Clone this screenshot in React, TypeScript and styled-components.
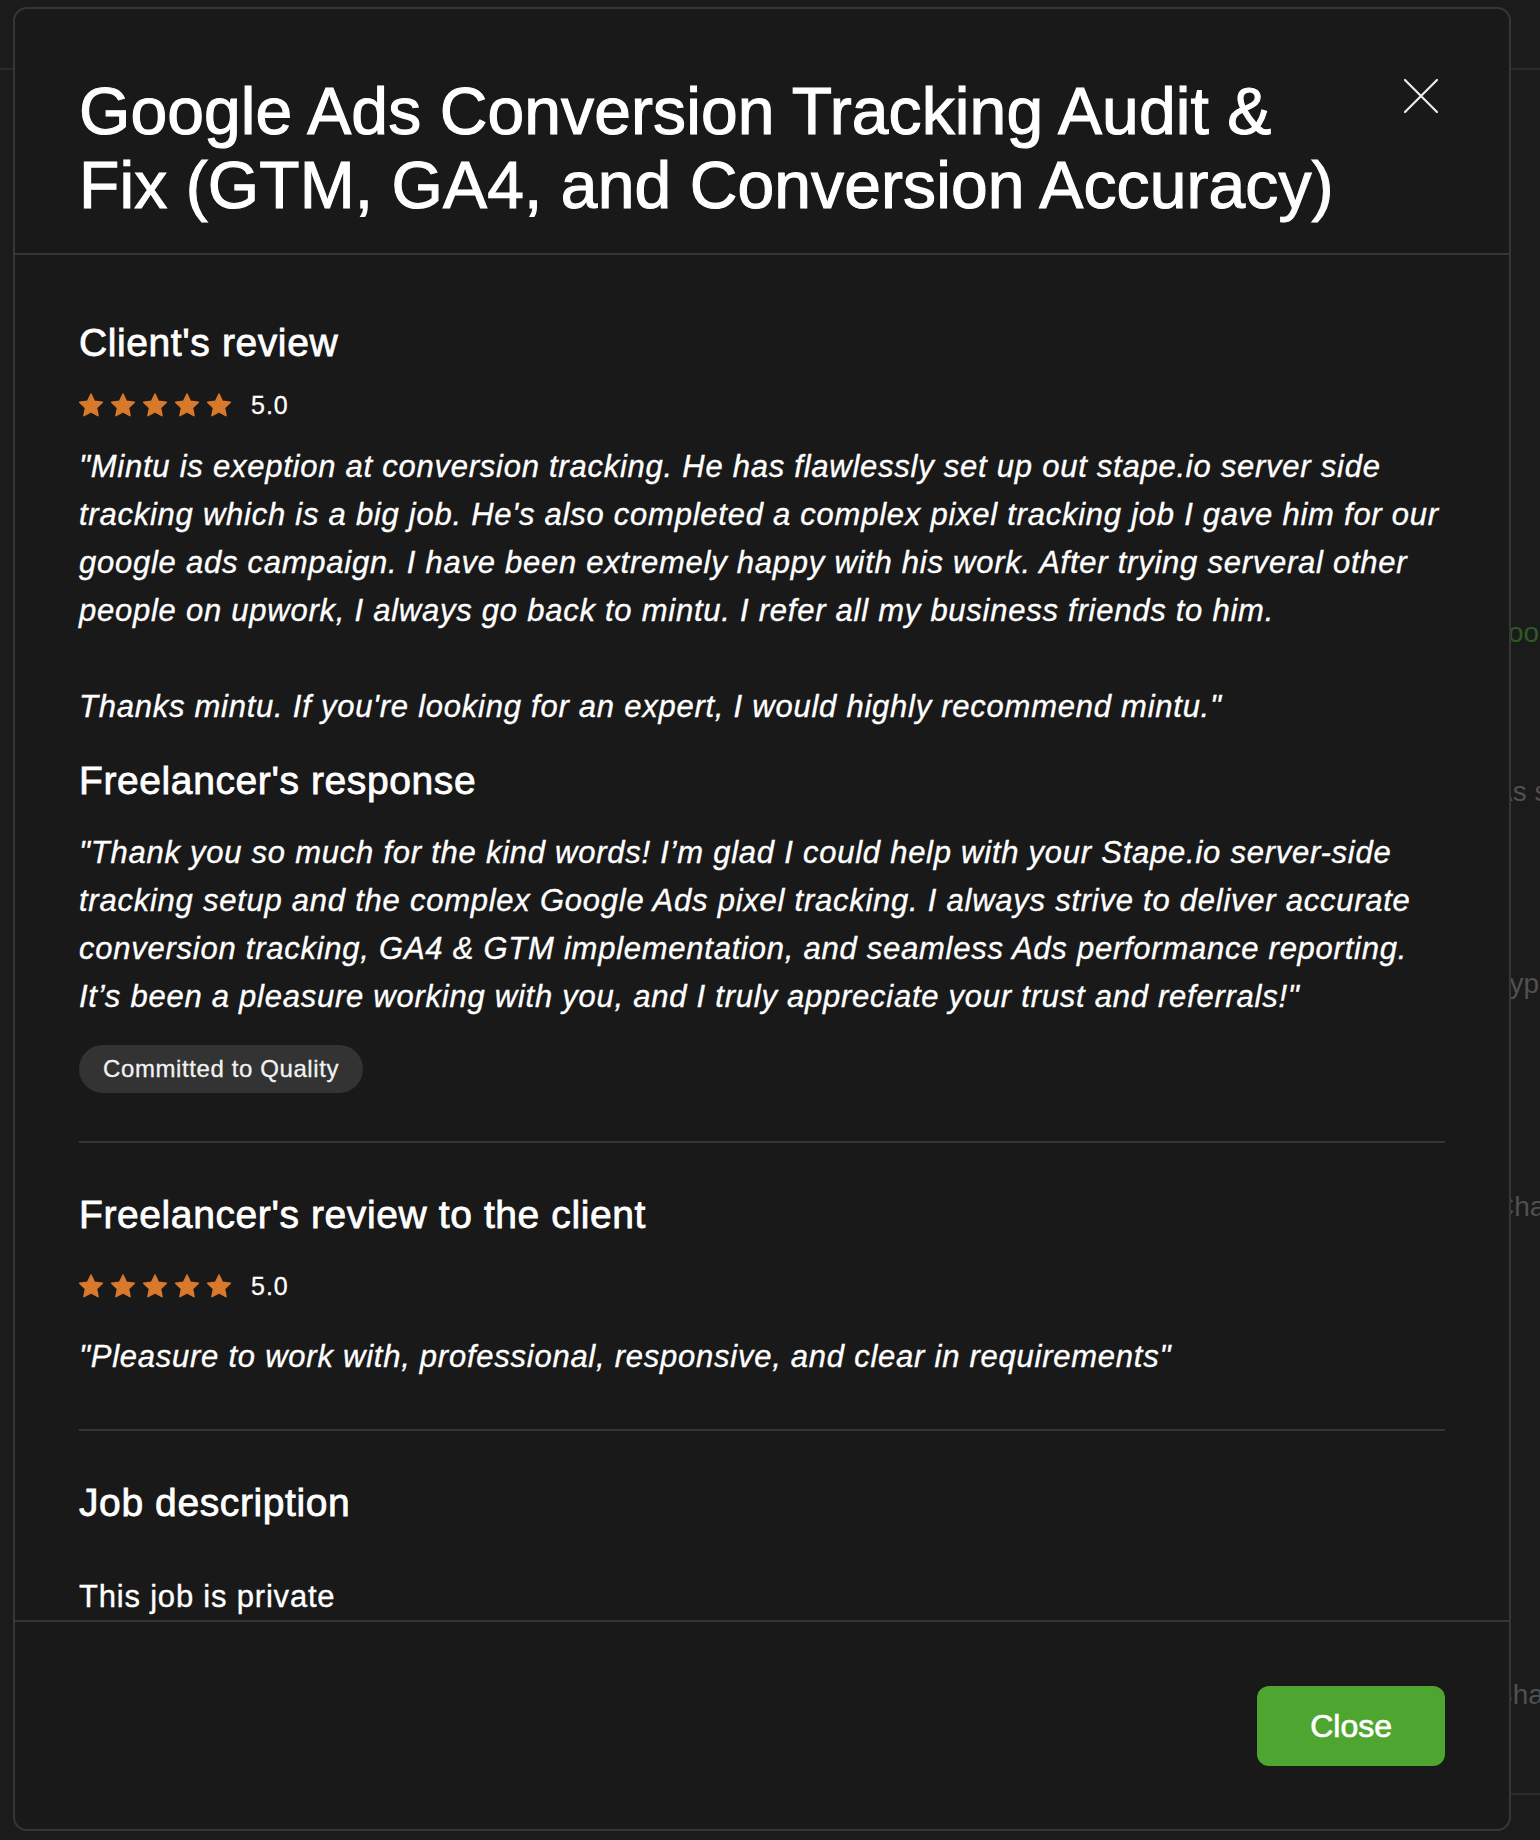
import React from "react";
import styled, { createGlobalStyle } from "styled-components";

const FONT = `"Liberation Sans", Arial, Helvetica, sans-serif`;

const GlobalStyle = createGlobalStyle`
  *, *::before, *::after { box-sizing: border-box; }
  html, body {
    margin: 0;
    padding: 0;
    background: #1b1b1b;
  }
  body {
    font-family: ${FONT};
    color: #ffffff;
    overflow: hidden;
    -webkit-font-smoothing: antialiased;
  }
`;

/* ---------- profile page sitting behind the dialog ---------- */

const Page = styled.div`
  position: relative;
  width: 1540px;
  height: 1840px;
  overflow: hidden;
  background: #1b1b1b;
`;

const TopBar = styled.header`
  height: 70px;
  border-bottom: 2px solid #2b2b2b;
`;

const PageColumns = styled.div`
  display: grid;
  grid-template-columns: 1fr 46px;
`;

const MainColumn = styled.main``;

const Sidebar = styled.aside`
  display: flex;
  flex-direction: column;
  align-items: flex-start;
  white-space: nowrap;
`;

const SideItem = styled.span<{ $top: number; $accent?: boolean }>`
  margin-top: ${(p) => p.$top}px;
  font: 400 28px/36px ${FONT};
  color: ${(p) => (p.$accent ? "#2f5a25" : "#505050")};
`;

const SideRule = styled.div`
  margin-top: 80px;
  width: 200px;
  border-top: 2px solid #2b2b2b;
`;

/* ---------- dialog ---------- */

const Dialog = styled.section`
  position: absolute;
  top: 7px;
  left: 13px;
  width: 1498px;
  height: 1824px;
  display: flex;
  flex-direction: column;
  background: #191919;
  border: 2px solid #363636;
  border-radius: 14px;
  overflow: hidden;
`;

const Header = styled.div`
  display: flex;
  align-items: flex-start;
  gap: 40px;
  padding: 65px 70px 31px 64px;
  border-bottom: 2px solid #363636;
`;

const Title = styled.h1`
  flex: 1;
  margin: 0;
  font: 400 66px/74px ${FONT};
  letter-spacing: 0.1px;
  color: #ffffff;
  -webkit-text-stroke: 1.1px #ffffff;
`;

const CloseIcon = styled.button`
  flex: none;
  width: 36px;
  height: 36px;
  margin-top: 4px;
  padding: 0;
  border: 0;
  background: transparent;
  color: #ececec;
  cursor: pointer;
  svg {
    display: block;
  }
`;

const Body = styled.div`
  flex: 1;
  min-height: 0;
  overflow: hidden;
  padding: 64px 64px 0;
`;

const Section = styled.div<{ $gap: number }>`
  display: flex;
  flex-direction: column;
  align-items: flex-start;
  gap: ${(p) => p.$gap}px;
`;

const Heading = styled.h2<{ $push?: number }>`
  margin: ${(p) => p.$push ?? 0}px 0 0;
  font: 400 39px/48px ${FONT};
  letter-spacing: 0.6px;
  color: #ffffff;
  -webkit-text-stroke: 0.8px #ffffff;
`;

const Rating = styled.div`
  display: flex;
  align-items: center;
  gap: 20px;
  height: 28px;
`;

const Stars = styled.div`
  display: flex;
  gap: 8px;
`;

const Score = styled.span`
  font: 400 25px/28px ${FONT};
  letter-spacing: 1px;
  color: #ffffff;
  -webkit-text-stroke: 0.3px #ffffff;
`;

const Quote = styled.p`
  margin: 0;
  width: 100%;
  font: italic 400 31px/48px ${FONT};
  letter-spacing: 0.75px;
  color: #ffffff;
  -webkit-text-stroke: 0.35px #ffffff;
`;

const PlainText = styled.p`
  margin: 0;
  font: 400 31px/48px ${FONT};
  letter-spacing: 0.8px;
  color: #ffffff;
  -webkit-text-stroke: 0.35px #ffffff;
`;

const Badge = styled.span`
  display: inline-flex;
  align-items: center;
  height: 48px;
  padding: 0 24px;
  border-radius: 24px;
  background: #333333;
  font: 400 24px/1 ${FONT};
  letter-spacing: 0.6px;
  color: #f2f2f2;
  -webkit-text-stroke: 0.3px #f2f2f2;
`;

const Divider = styled.hr`
  width: 100%;
  margin: 48px 0;
  border: 0;
  border-top: 2px solid #363636;
`;

const Footer = styled.div`
  display: flex;
  justify-content: flex-end;
  padding: 64px 64px 63px;
  border-top: 2px solid #363636;
`;

const PrimaryButton = styled.button`
  height: 80px;
  padding: 0 53px;
  border: 0;
  border-radius: 12px;
  background: #4ea52f;
  font: 400 32px/1 ${FONT};
  color: #ffffff;
  -webkit-text-stroke: 0.7px #ffffff;
  cursor: pointer;
`;

/* ---------- drawings ---------- */

const Star = () => (
  <svg width="24" height="24" viewBox="2 1.8 20 20" aria-hidden="true">
    <path
      d="M12 2.6l2.9 6.05 6.6.86-4.85 4.6 1.22 6.6L12 17.45l-5.87 3.26 1.22-6.6L2.5 9.51l6.6-.86z"
      fill="#d9792b"
      stroke="#d9792b"
      strokeWidth="1.2"
      strokeLinejoin="round"
    />
  </svg>
);

const StarRating = ({ score }: { score: string }) => (
  <Rating>
    <Stars>
      {[0, 1, 2, 3, 4].map((i) => (
        <Star key={i} />
      ))}
    </Stars>
    <Score>{score}</Score>
  </Rating>
);

const CrossGlyph = () => (
  <svg width="36" height="36" viewBox="0 0 36 36" aria-hidden="true">
    <path
      d="M2 2L34 34M34 2L2 34"
      stroke="currentColor"
      strokeWidth="2.2"
      strokeLinecap="round"
    />
  </svg>
);

export default function App() {
  return (
    <>
      <GlobalStyle />
      <Page>
        <TopBar />
        <PageColumns>
          <MainColumn />
          <Sidebar>
            <SideItem $top={545} $accent>
              Tools
            </SideItem>
            <SideItem $top={123}>As seen in</SideItem>
            <SideItem $top={156}>Types of work</SideItem>
            <SideItem $top={187}>Chat with freelancer</SideItem>
            <SideItem $top={452}>Share profile</SideItem>
            <SideRule />
          </Sidebar>
        </PageColumns>

        <Dialog role="dialog" aria-modal="true">
          <Header>
            <Title>
              Google Ads Conversion Tracking Audit &amp; Fix (GTM, GA4, and
              Conversion Accuracy)
            </Title>
            <CloseIcon aria-label="Close">
              <CrossGlyph />
            </CloseIcon>
          </Header>

          <Body>
            <Section $gap={24}>
              <Heading>Client's review</Heading>
              <StarRating score="5.0" />
              <Quote>
                "Mintu is exeption at conversion tracking. He has flawlessly set
                up out stape.io server side tracking which is a big job. He's
                also completed a complex pixel tracking job I gave him for our
                google ads campaign. I have been extremely happy with his work.
                After trying serveral other people on upwork, I always go back
                to mintu. I refer all my business friends to him.
                <br />
                <br />
                Thanks mintu. If you're looking for an expert, I would highly
                recommend mintu."
              </Quote>
              <Heading $push={2}>Freelancer's response</Heading>
              <Quote>
                "Thank you so much for the kind words! I’m glad I could help with
                your Stape.io server-side tracking setup and the complex Google
                Ads pixel tracking. I always strive to deliver accurate
                conversion tracking, GA4 &amp; GTM implementation, and seamless
                Ads performance reporting. It’s been a pleasure working with
                you, and I truly appreciate your trust and referrals!"
              </Quote>
              <Badge>Committed to Quality</Badge>
            </Section>

            <Divider />

            <Section $gap={33}>
              <Heading>Freelancer's review to the client</Heading>
              <StarRating score="5.0" />
              <Quote>
                "Pleasure to work with, professional, responsive, and clear in
                requirements"
              </Quote>
            </Section>

            <Divider />

            <Section $gap={46}>
              <Heading>Job description</Heading>
              <PlainText>This job is private</PlainText>
            </Section>
          </Body>

          <Footer>
            <PrimaryButton>Close</PrimaryButton>
          </Footer>
        </Dialog>
      </Page>
    </>
  );
}
